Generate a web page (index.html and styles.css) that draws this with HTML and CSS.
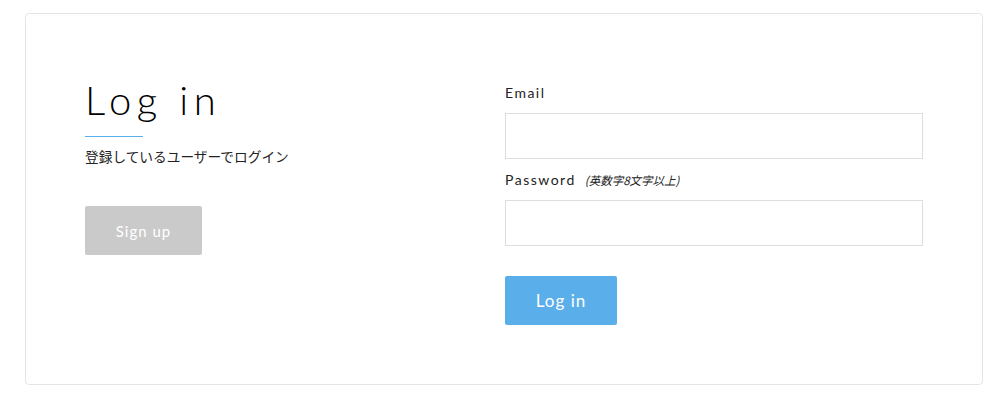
FILE: index.html
```html
<!DOCTYPE html>
<html lang="ja">
<head>
<meta charset="utf-8">
<title>Log in</title>
<link rel="stylesheet" href="styles.css">
</head>
<body>
<div class="card">
  <div class="intro">
    <h1 class="title">Log in</h1>
    <div class="rule"></div>
    <p class="lead">登録しているユーザーでログイン</p>
    <button class="btn btn-gray" type="button">Sign up</button>
  </div>
  <form class="form">
    <label class="label" for="email">Email</label>
    <input class="field" id="email" type="email">
    <label class="label label-pw" for="pw">Password<span class="note">(英数字8文字以上)</span></label>
    <input class="field" id="pw" type="password">
    <button class="btn btn-blue" type="button">Log in</button>
  </form>
</div>
</body>
</html>
```

FILE: styles.css
```css
html, body {
  margin: 0;
  padding: 0;
  background: #ffffff;
}

body {
  font-family: "Lato", "Noto Sans CJK JP", sans-serif;
  color: #222;
  padding: 13px 17px 0 25px;
}

.card {
  border: 1px solid #e4e4e4;
  border-radius: 4px;
  padding: 62px 59px 59px 59px;
  display: grid;
  grid-template-columns: 420px 1fr;
  box-sizing: border-box;
  width: 958px;
}

.intro {
  display: flex;
  flex-direction: column;
  align-items: flex-start;
}

.title {
  margin: 0;
  font-family: "Lato", sans-serif;
  font-weight: 300;
  font-size: 40px;
  line-height: 48px;
  letter-spacing: 5.6px;
  color: #000;
}

.rule {
  width: 58px;
  height: 1px;
  background: #5aaeea;
  margin-top: 12px;
}

.lead {
  margin: 9px 0 0 0;
  font-family: "Noto Sans CJK JP", sans-serif;
  font-size: 13.7px;
  line-height: 20px;
  color: #222;
}

.btn {
  border: none;
  border-radius: 2px;
  color: #fff;
  font-family: "Lato", sans-serif;
  letter-spacing: 1px;
  cursor: pointer;
  padding: 0;
}

.btn-gray {
  margin-top: 40px;
  width: 117px;
  height: 49px;
  background: #cacaca;
  font-size: 15px;
}

.btn-blue {
  margin-top: 30px;
  width: 112px;
  height: 49px;
  background: #5aaeea;
  font-size: 17px;
}

.form {
  display: flex;
  flex-direction: column;
  align-items: flex-start;
  padding-top: 7px;
  margin: 0;
}

.label {
  font-size: 14px;
  line-height: 20px;
  letter-spacing: 1.5px;
  color: #222;
  margin-bottom: 10px;
}

.label-pw {
  margin-top: 11px;
}

.note {
  font-family: "Noto Sans CJK JP", sans-serif;
  font-size: 11.5px;
  font-style: italic;
  letter-spacing: 0;
  margin-left: 9px;
  color: #222;
}

.field {
  box-sizing: border-box;
  width: 100%;
  height: 46px;
  border: 1px solid #dedede;
  border-radius: 0;
  margin: 0;
  padding: 0 10px;
  font-size: 14px;
  outline: none;
}
```
